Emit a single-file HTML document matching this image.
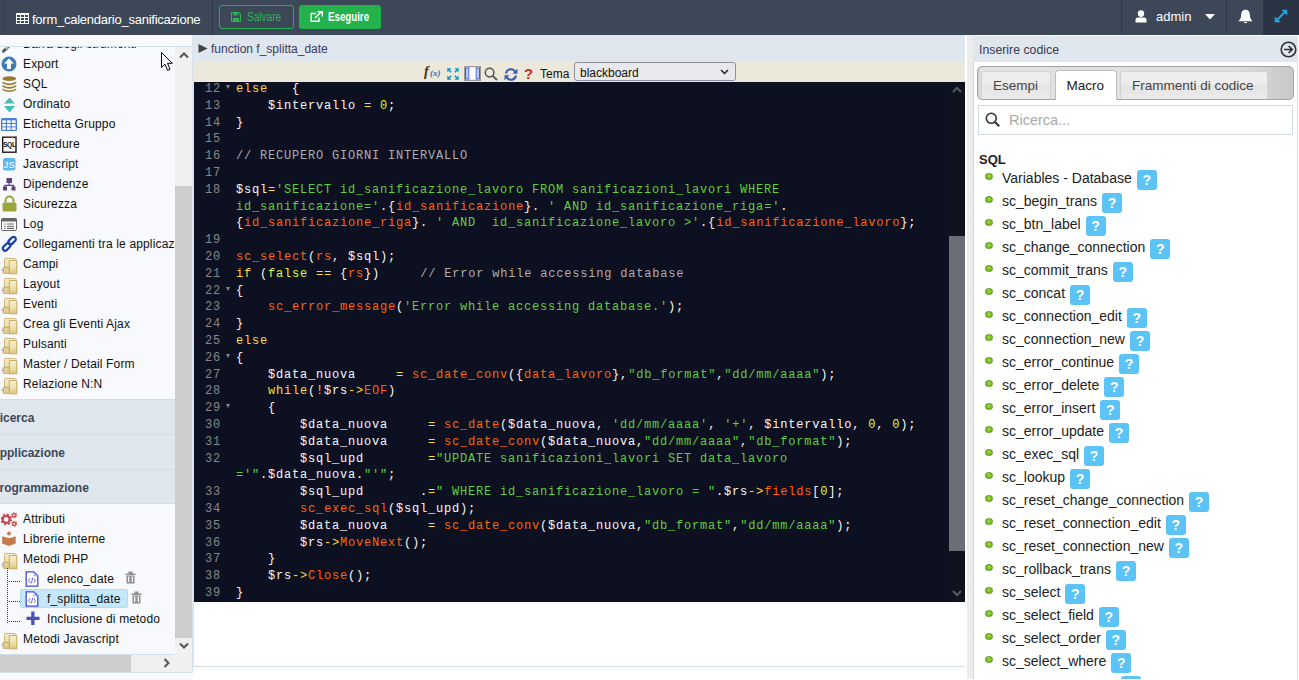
<!DOCTYPE html>
<html><head><meta charset="utf-8">
<style>
*{box-sizing:border-box;margin:0;padding:0}
html,body{width:1299px;height:680px;overflow:hidden;background:#fff;font-family:"Liberation Sans",sans-serif;}
.abs{position:absolute}
#top{position:absolute;left:0;top:0;width:1299px;height:35px;background:#3c4858;}
#side{position:absolute;left:0;top:35px;width:193px;height:645px;background:#f7f9fc;overflow:hidden}
.it{position:absolute;left:0;height:20px;line-height:20px;font-size:12px;color:#111;white-space:nowrap;letter-spacing:0.15px}
.it .tx{position:absolute;left:23px;top:0}
.it svg{position:absolute}
.hd{position:absolute;left:0;width:175px;height:35px;background:#dfe6ee;border-top:1px solid #d3dce6;font-weight:bold;font-size:12px;color:#3c4858;line-height:36px}
#ed{position:absolute;left:193px;top:35px;width:772px;height:645px;background:#fff}
#code{position:absolute;left:1px;top:47px;width:771px;height:520px;background:#0c1021;overflow:hidden}
.ln{position:absolute;left:0;height:17px;font-family:"Liberation Mono",monospace;font-size:12px;letter-spacing:0.8px;line-height:16.8px;white-space:pre;color:#f8f8f8}
.ln .n{position:absolute;left:0;width:27px;text-align:right;color:#888}
.ln .c{position:absolute;left:42px}
.fd{position:absolute;left:32px;top:4px;width:0;height:0;border-left:2.5px solid transparent;border-right:2.5px solid transparent;border-top:4px solid #888}
.k{color:#fbde2d}.a{color:#d8fa3c}.v{color:#ff6400}.s{color:#61ce3c}.cm{color:#aeaeae}
#rp{position:absolute;left:965px;top:35px;width:334px;height:644px;background:#fff;overflow:hidden}
.mi{position:absolute;left:37px;height:23px;font-size:14px;color:#222;white-space:nowrap;line-height:23px}
.q{display:inline-block;vertical-align:middle;width:20px;height:20px;border-radius:3px;background:#5bc3f6;color:#fff;font-weight:bold;font-size:14px;line-height:20px;text-align:center;margin-left:5px;position:relative;top:0px}
.bul{position:absolute;left:-17px;top:5.5px;width:7.5px;height:7.5px;border-radius:50%;background:radial-gradient(circle at 50% 40%,#9ad83a,#74bb1a 75%);border:1px solid #4e9412}
</style></head><body>
<svg width="0" height="0" style="position:absolute"><defs><linearGradient id="fg1" x1="0" y1="0" x2="0" y2="1"><stop offset="0" stop-color="#f6edcc"/><stop offset="1" stop-color="#e2cf92"/></linearGradient><linearGradient id="fg2" x1="0" y1="0" x2="0" y2="1"><stop offset="0" stop-color="#f8f0d2"/><stop offset="0.55" stop-color="#efe1ac"/><stop offset="1" stop-color="#dcc582"/></linearGradient>




</defs></svg>

<!-- TOP BAR -->
<div id="top">
  <div class="abs" style="left:4px;top:0;width:1px;height:35px;background:#323b49"></div>
  <svg class="abs" style="left:16px;top:13px" width="13" height="11" viewBox="0 0 13 11"><rect x="0.5" y="0.5" width="12" height="10" fill="none" stroke="#fff"/><rect x="0" y="0" width="13" height="2" fill="#fff"/><path d="M0 4.5H13M0 7.5H13M4.5 2V11M8.5 2V11" stroke="#fff" stroke-width="1"/></svg>
  <div class="abs" style="left:32px;top:12px;font-size:13px;letter-spacing:-0.25px;color:#fff;line-height:16px">form_calendario_sanificazione</div>
  <div class="abs" style="left:212px;top:0;width:1px;height:35px;background:#2f3845"></div>
  <div class="abs" style="left:219px;top:5px;width:75px;height:24px;border:1px solid #23b24b;border-radius:3px"></div>
  <div class="abs" style="left:299px;top:5px;width:82px;height:24px;background:#23b24b;border-radius:3px"></div>
  <svg class="abs" style="left:231px;top:12px" width="10" height="10" viewBox="0 0 10 10"><path d="M0.5 0.5H7.5L9.5 2.5V9.5H0.5z" fill="none" stroke="#2fb454" stroke-width="1.2"/><rect x="2.5" y="0.5" width="4" height="3" fill="#2fb454"/><rect x="2" y="6" width="6" height="3.5" fill="#2fb454"/></svg>
  <div class="abs" style="left:247px;top:10px;font-size:12px;color:#2fb454;line-height:14px;transform:scaleX(0.84);transform-origin:0 0">Salvare</div>
  <svg class="abs" style="left:310px;top:11px" width="13" height="11" viewBox="0 0 13 11"><path d="M6 2.5H1.2V10.3H9V6.5" fill="none" stroke="#fff" stroke-width="1.4"/><path d="M5 7L11 1M7.5 0.7H12.3V5.5" fill="none" stroke="#fff" stroke-width="1.6"/></svg>
  <div class="abs" style="left:327.5px;top:10px;font-size:12px;font-weight:bold;color:#fff;line-height:14px;transform:scaleX(0.81);transform-origin:0 0">Eseguire</div>
  <svg class="abs" style="left:1135px;top:10px" width="12" height="13" viewBox="0 0 12 13"><ellipse cx="6" cy="3.6" rx="3.2" ry="3.4" fill="#fff"/><path d="M0.5 12.5 V9.8 Q0.5 7.5 3 7.5 H9 Q11.5 7.5 11.5 9.8 V12.5z" fill="#fff"/></svg>
  <svg class="abs" style="left:1205px;top:14px" width="10" height="6" viewBox="0 0 10 6"><path d="M0 0H10L5 5.5z" fill="#fff"/></svg>
  <svg class="abs" style="left:1238px;top:9px" width="15" height="15" viewBox="0 0 15 15"><path d="M7.5 0.8 Q11.6 0.8 11.8 5.5 Q12 10 14.3 11.8 V12.3 H0.7 V11.8 Q3 10 3.2 5.5 Q3.4 0.8 7.5 0.8z" fill="#fff"/><path d="M5.6 13 Q7.5 15.4 9.4 13z" fill="#fff"/></svg>
  <div class="abs" style="left:1121px;top:0;width:1px;height:35px;background:#2f3845"></div>
  <div class="abs" style="left:1156px;top:9px;font-size:13px;color:#fff;line-height:16px">admin</div>
  <div class="abs" style="left:1226px;top:0;width:1px;height:35px;background:#2f3845"></div>
  <div class="abs" style="left:1263px;top:0;width:36px;height:35px;background:#2a3444"></div>
  <svg class="abs" style="left:1274px;top:9px" width="14" height="14" viewBox="0 0 14 14"><path d="M2.5 11.5L11.5 2.5" stroke="#1ea8ea" stroke-width="1.8"/><path d="M7.5 0.8H13.2V6.5z M0.8 7.5V13.2H6.5z" fill="#1ea8ea"/></svg>
</div>

<!-- SIDEBAR -->
<div id="side">
  <div class="abs" style="left:0;top:11px;width:193px;height:1px;background:#d5dee6"></div>
  <div id="list" class="abs" style="left:0;top:12px;width:175px;height:608px;overflow:hidden">
<div class="it" style="top:-13px;width:175px"><span class="tx" style="left:23px">Barra degli strumenti</span><svg width="16" height="19" viewBox="0 0 16 19" style="left:0px;top:1px"><path d="M2.2 15.2 L6.6 11.6 L9.6 11.8 L9.2 12.8 L4.2 17.6 Q3 18 2.2 17.2z" fill="#5a5a5a"/><circle cx="6.6" cy="13" r="0.9" fill="#f7f9fc"/></svg></div>
<div class="it" style="top:7px;width:175px"><span class="tx" style="left:23px">Export</span><svg width="16" height="16" viewBox="0 0 16 16" style="left:1px;top:2px"><circle cx="8" cy="8" r="7.5" fill="#3d7bb9"/><path d="M8 2.6 L13 7.6 H10 V13 H6 V7.6 H3z" fill="#fff"/></svg></div>
<div class="it" style="top:27px;width:175px"><span class="tx" style="left:23px">SQL</span><svg width="17" height="17" viewBox="0 0 17 17" style="left:1px;top:2px"><ellipse cx="8.3" cy="2.6" rx="6.9" ry="2.3" fill="#9c7a32"/><path d="M1.4 5.4 Q8.3 9.6 15.2 5.4 V7.2 Q8.3 11.4 1.4 7.2z" fill="#9c7a32"/><path d="M1.4 8.9 Q8.3 13.1 15.2 8.9 V10.7 Q8.3 14.9 1.4 10.7z" fill="#9c7a32"/><path d="M1.4 12.4 Q8.3 16.6 15.2 12.4 V14 Q8.3 18 1.4 14z" fill="#9c7a32"/></svg></div>
<div class="it" style="top:47px;width:175px"><span class="tx" style="left:23px">Ordinato</span><svg width="16" height="16" viewBox="0 0 16 16" style="left:1px;top:3px"><path d="M8.5 0.5 L14 6.5 H3z" fill="#47bdb6"/><path d="M3 9 H14 L8.5 15.5z" fill="#47bdb6"/></svg></div>
<div class="it" style="top:67px;width:175px"><span class="tx" style="left:23px">Etichetta Gruppo</span><svg width="17" height="16" viewBox="0 0 17 16" style="left:0px;top:3px"><rect x="1" y="1" width="16" height="13" rx="1.6" fill="#4a7fdc"/><rect x="2.4" y="3.3" width="3.4" height="2.7" fill="#fff"/><rect x="2.4" y="7.0" width="3.4" height="2.4" fill="#fff"/><rect x="2.4" y="10.4" width="3.4" height="2.4" fill="#fff"/><rect x="7.0" y="3.3" width="3.6" height="2.7" fill="#fff"/><rect x="7.0" y="7.0" width="3.6" height="2.4" fill="#fff"/><rect x="7.0" y="10.4" width="3.6" height="2.4" fill="#fff"/><rect x="11.8" y="3.3" width="3.8" height="2.7" fill="#fff"/><rect x="11.8" y="7.0" width="3.8" height="2.4" fill="#fff"/><rect x="11.8" y="10.4" width="3.8" height="2.4" fill="#fff"/></svg></div>
<div class="it" style="top:87px;width:175px"><span class="tx" style="left:23px">Procedure</span><svg width="16" height="17" viewBox="0 0 16 17" style="left:1px;top:2px"><rect x="1.7" y="1.2" width="13.3" height="15" fill="#fff" stroke="#231818" stroke-width="1.4"/><path d="M11 1.5 L14.5 5" stroke="#ccc" stroke-width="1"/><text x="8.3" y="11" font-family="Liberation Sans" font-weight="bold" font-size="6.8" text-anchor="middle" fill="#111" letter-spacing="-0.4">SQL</text></svg></div>
<div class="it" style="top:107px;width:175px"><span class="tx" style="left:23px">Javascript</span><svg width="16" height="16" viewBox="0 0 16 16" style="left:1px;top:3px"><rect x="2" y="1" width="12.5" height="12.5" rx="2.2" fill="#5cb8ec"/><text x="8.3" y="11.3" font-family="Liberation Sans" font-size="9.5" text-anchor="middle" fill="#fff">JS</text></svg></div>
<div class="it" style="top:127px;width:175px"><span class="tx" style="left:23px">Dipendenze</span><svg width="16" height="16" viewBox="0 0 16 16" style="left:1px;top:3px"><rect x="5.5" y="1" width="5.5" height="5" fill="#5e3f7e"/><path d="M8.2 6V8.3M4 10V8.3H12.5V10" stroke="#5e3f7e" stroke-width="1.2" fill="none"/><rect x="2" y="9.5" width="4" height="4" fill="#5e3f7e"/><rect x="10.5" y="9.5" width="4" height="4" fill="#5e3f7e"/></svg></div>
<div class="it" style="top:147px;width:175px"><span class="tx" style="left:23px">Sicurezza</span><svg width="16" height="17" viewBox="0 0 16 17" style="left:1px;top:1px"><path d="M4.5 7.5 V5.5 A4 4 0 0 1 12.5 5.5 V7.5" stroke="#9aa53c" stroke-width="2.2" fill="none"/><rect x="1.5" y="7.5" width="14" height="9" rx="1.5" fill="#9aa53c"/></svg></div>
<div class="it" style="top:167px;width:175px"><span class="tx" style="left:23px">Log</span><svg width="16" height="16" viewBox="0 0 16 16" style="left:1px;top:3px"><rect x="0.5" y="1.5" width="15" height="12" rx="1.5" fill="#fff" stroke="#666"/><rect x="0.5" y="1.5" width="15" height="3" fill="#666"/><path d="M3 7h1.5M6 7h7M3 9.2h1.5M6 9.2h7M3 11.4h1.5M6 11.4h7" stroke="#666" stroke-width="1.1"/></svg></div>
<div class="it" style="top:187px;width:175px"><span class="tx" style="left:23px">Collegamenti tra le applicazioni</span><svg width="17" height="17" viewBox="0 0 17 17" style="left:1px;top:2px"><g fill="none" stroke="#1a3ea8" stroke-width="2.2"><rect x="6.8" y="2.3" width="8.6" height="4.6" rx="2.3" transform="rotate(-45 11.1 4.6)"/><rect x="1.2" y="8.7" width="8.6" height="4.6" rx="2.3" transform="rotate(-45 5.5 11)"/></g></svg></div>
<div class="it" style="top:207px;width:175px"><span class="tx" style="left:23px">Campi</span><svg width="18" height="18" viewBox="0 0 18 18" style="left:0px;top:3px"><path d="M5 1.5 H14.5 Q16.3 1.5 16.3 3.3 V15.5 H4.5 V2z" fill="url(#fg1)" stroke="#cdb677" stroke-width="1"/><path d="M9.3 3.5 H15.3 Q16.8 3.5 16.8 5 V16.8 H9.3z" fill="url(#fg2)" stroke="#c5aa66" stroke-width="1"/><path d="M3.3 10.3 H9.3 V16.3 H3.3z" fill="#e3cf90" stroke="#c5aa66" stroke-width="1"/><path d="M2.2 11.5 V14.5" stroke="#9aa0b0" stroke-width="0.8"/></svg></div>
<div class="it" style="top:227px;width:175px"><span class="tx" style="left:23px">Layout</span><svg width="18" height="18" viewBox="0 0 18 18" style="left:0px;top:3px"><path d="M5 1.5 H14.5 Q16.3 1.5 16.3 3.3 V15.5 H4.5 V2z" fill="url(#fg1)" stroke="#cdb677" stroke-width="1"/><path d="M9.3 3.5 H15.3 Q16.8 3.5 16.8 5 V16.8 H9.3z" fill="url(#fg2)" stroke="#c5aa66" stroke-width="1"/><path d="M3.3 10.3 H9.3 V16.3 H3.3z" fill="#e3cf90" stroke="#c5aa66" stroke-width="1"/><path d="M2.2 11.5 V14.5" stroke="#9aa0b0" stroke-width="0.8"/></svg></div>
<div class="it" style="top:247px;width:175px"><span class="tx" style="left:23px">Eventi</span><svg width="18" height="18" viewBox="0 0 18 18" style="left:0px;top:3px"><path d="M5 1.5 H14.5 Q16.3 1.5 16.3 3.3 V15.5 H4.5 V2z" fill="url(#fg1)" stroke="#cdb677" stroke-width="1"/><path d="M9.3 3.5 H15.3 Q16.8 3.5 16.8 5 V16.8 H9.3z" fill="url(#fg2)" stroke="#c5aa66" stroke-width="1"/><path d="M3.3 10.3 H9.3 V16.3 H3.3z" fill="#e3cf90" stroke="#c5aa66" stroke-width="1"/><path d="M2.2 11.5 V14.5" stroke="#9aa0b0" stroke-width="0.8"/></svg></div>
<div class="it" style="top:267px;width:175px"><span class="tx" style="left:23px">Crea gli Eventi Ajax</span><svg width="18" height="18" viewBox="0 0 18 18" style="left:0px;top:3px"><path d="M5 1.5 H14.5 Q16.3 1.5 16.3 3.3 V15.5 H4.5 V2z" fill="url(#fg1)" stroke="#cdb677" stroke-width="1"/><path d="M9.3 3.5 H15.3 Q16.8 3.5 16.8 5 V16.8 H9.3z" fill="url(#fg2)" stroke="#c5aa66" stroke-width="1"/><path d="M3.3 10.3 H9.3 V16.3 H3.3z" fill="#e3cf90" stroke="#c5aa66" stroke-width="1"/><path d="M2.2 11.5 V14.5" stroke="#9aa0b0" stroke-width="0.8"/></svg></div>
<div class="it" style="top:287px;width:175px"><span class="tx" style="left:23px">Pulsanti</span><svg width="18" height="18" viewBox="0 0 18 18" style="left:0px;top:3px"><path d="M5 1.5 H14.5 Q16.3 1.5 16.3 3.3 V15.5 H4.5 V2z" fill="url(#fg1)" stroke="#cdb677" stroke-width="1"/><path d="M9.3 3.5 H15.3 Q16.8 3.5 16.8 5 V16.8 H9.3z" fill="url(#fg2)" stroke="#c5aa66" stroke-width="1"/><path d="M3.3 10.3 H9.3 V16.3 H3.3z" fill="#e3cf90" stroke="#c5aa66" stroke-width="1"/><path d="M2.2 11.5 V14.5" stroke="#9aa0b0" stroke-width="0.8"/></svg></div>
<div class="it" style="top:307px;width:175px"><span class="tx" style="left:23px">Master / Detail Form</span><svg width="18" height="18" viewBox="0 0 18 18" style="left:0px;top:3px"><path d="M5 1.5 H14.5 Q16.3 1.5 16.3 3.3 V15.5 H4.5 V2z" fill="url(#fg1)" stroke="#cdb677" stroke-width="1"/><path d="M9.3 3.5 H15.3 Q16.8 3.5 16.8 5 V16.8 H9.3z" fill="url(#fg2)" stroke="#c5aa66" stroke-width="1"/><path d="M3.3 10.3 H9.3 V16.3 H3.3z" fill="#e3cf90" stroke="#c5aa66" stroke-width="1"/><path d="M2.2 11.5 V14.5" stroke="#9aa0b0" stroke-width="0.8"/></svg></div>
<div class="it" style="top:327px;width:175px"><span class="tx" style="left:23px">Relazione N:N</span><svg width="18" height="18" viewBox="0 0 18 18" style="left:0px;top:3px"><path d="M5 1.5 H14.5 Q16.3 1.5 16.3 3.3 V15.5 H4.5 V2z" fill="url(#fg1)" stroke="#cdb677" stroke-width="1"/><path d="M9.3 3.5 H15.3 Q16.8 3.5 16.8 5 V16.8 H9.3z" fill="url(#fg2)" stroke="#c5aa66" stroke-width="1"/><path d="M3.3 10.3 H9.3 V16.3 H3.3z" fill="#e3cf90" stroke="#c5aa66" stroke-width="1"/><path d="M2.2 11.5 V14.5" stroke="#9aa0b0" stroke-width="0.8"/></svg></div>
<div class="hd" style="top:352px"><span style="position:absolute;left:-9px;top:0">Ricerca</span></div>
<div class="hd" style="top:387px"><span style="position:absolute;left:-9px;top:0">Applicazione</span></div>
<div class="hd" style="top:422px"><span style="position:absolute;left:-8.5px;top:0">Programmazione</span></div>
<div class="abs" style="left:0;top:456px;width:175px;height:1px;background:#d3dce6"></div>
<div class="it" style="top:462px;width:175px"><span class="tx" style="left:23px">Attributi</span><svg width="17" height="16" viewBox="0 0 17 16" style="left:1px;top:3px"><g fill="none" stroke="#c8494f"><circle cx="5.2" cy="7.4" r="3.5" stroke-width="2.3"/><circle cx="5.2" cy="7.4" r="5.1" stroke-width="1.7" stroke-dasharray="2 2.0"/><circle cx="13.2" cy="3.2" r="1.6" stroke-width="1.3"/><circle cx="13.2" cy="3.2" r="2.5" stroke-width="1.1" stroke-dasharray="1.3 1.3"/><circle cx="13.2" cy="11.7" r="1.6" stroke-width="1.3"/><circle cx="13.2" cy="11.7" r="2.5" stroke-width="1.1" stroke-dasharray="1.3 1.3"/></g></svg></div>
<div class="it" style="top:482px;width:175px"><span class="tx" style="left:23px">Librerie interne</span><svg width="16" height="16" viewBox="0 0 16 16" style="left:1px;top:2px"><circle cx="8" cy="2.5" r="1.9" fill="#c87b4a"/><path d="M1.2 5.3 L8 7.3 L14.7 5.3 V12.6 L8 15 L1.2 12.6z" fill="#c87b4a"/></svg></div>
<div class="it" style="top:502px;width:175px"><span class="tx" style="left:23px">Metodi PHP</span><svg width="18" height="18" viewBox="0 0 18 18" style="left:0px;top:3px"><path d="M5 1.5 H14.5 Q16.3 1.5 16.3 3.3 V15.5 H4.5 V2z" fill="url(#fg1)" stroke="#cdb677" stroke-width="1"/><path d="M9.3 3.5 H15.3 Q16.8 3.5 16.8 5 V16.8 H9.3z" fill="url(#fg2)" stroke="#c5aa66" stroke-width="1"/><path d="M3.3 10.3 H9.3 V16.3 H3.3z" fill="#e3cf90" stroke="#c5aa66" stroke-width="1"/><path d="M2.2 11.5 V14.5" stroke="#9aa0b0" stroke-width="0.8"/></svg></div>
<div class="abs" style="left:7px;top:521px;width:1px;height:55px;background:repeating-linear-gradient(#333 0 1px,transparent 1px 2px)"></div>
<div class="abs" style="left:8px;top:534px;width:12px;height:1px;background:repeating-linear-gradient(90deg,transparent 0 1px,#333 1px 2px)"></div>
<div class="abs" style="left:8px;top:554px;width:12px;height:1px;background:repeating-linear-gradient(90deg,transparent 0 1px,#333 1px 2px)"></div>
<div class="abs" style="left:8px;top:574px;width:12px;height:1px;background:repeating-linear-gradient(90deg,transparent 0 1px,#333 1px 2px)"></div>
<div class="abs" style="left:20px;top:542px;width:108px;height:19px;background:#c3e7fb;border:1px solid #b3dcf3;border-radius:2px"></div>
<svg class="abs" width="14" height="16" viewBox="0 0 14 16" style="left:25px;top:524px"><path d="M1.2 0.8 H8.8 L12.8 4.8 V15.2 H1.2z" fill="#fff" stroke="#4646dc" stroke-width="1.3"/><path d="M8.8 0.8 V4.8 H12.8" fill="none" stroke="#9a9ae8" stroke-width="0.9"/><path d="M5.2 7.3 L3.6 9.6 L5.2 11.9M8.8 7.3 L10.4 9.6 L8.8 11.9M7.7 6.8 L6.3 12.4" stroke="#4646dc" stroke-width="0.8" fill="none"/></svg>
<svg class="abs" width="14" height="16" viewBox="0 0 14 16" style="left:25px;top:544px"><path d="M1.2 0.8 H8.8 L12.8 4.8 V15.2 H1.2z" fill="#fff" stroke="#4646dc" stroke-width="1.3"/><path d="M8.8 0.8 V4.8 H12.8" fill="none" stroke="#9a9ae8" stroke-width="0.9"/><path d="M5.2 7.3 L3.6 9.6 L5.2 11.9M8.8 7.3 L10.4 9.6 L8.8 11.9M7.7 6.8 L6.3 12.4" stroke="#4646dc" stroke-width="0.8" fill="none"/></svg>
<svg class="abs" width="11" height="13" viewBox="0 0 11 13" style="left:125px;top:524px"><path d="M0.5 2.5 H10.5 V4 H0.5z M3.5 0.5 H7.5 V2.5 H3.5z" fill="#8f8f8f"/><path d="M1.5 4.5 H9.5 V12.5 H1.5z" fill="#8f8f8f"/><path d="M3 5.5 V11 H4.3 V5.5z M6.7 5.5 V11 H8 V5.5z" fill="#fff"/></svg>
<svg class="abs" width="11" height="13" viewBox="0 0 11 13" style="left:131px;top:544px"><path d="M0.5 2.5 H10.5 V4 H0.5z M3.5 0.5 H7.5 V2.5 H3.5z" fill="#8f8f8f"/><path d="M1.5 4.5 H9.5 V12.5 H1.5z" fill="#8f8f8f"/><path d="M3 5.5 V11 H4.3 V5.5z M6.7 5.5 V11 H8 V5.5z" fill="#fff"/></svg>
<svg class="abs" width="14" height="14" viewBox="0 0 14 14" style="left:26px;top:564px"><path d="M5.2 0.5h3.3v5.2h5v3.2h-5v5.1H5.2V8.9H0.5V5.7h4.7z" fill="#4a52b6"/></svg>
<div class="it" style="top:522px"><span class="tx" style="left:47px">elenco_date</span></div>
<div class="it" style="top:542px"><span class="tx" style="left:47px">f_splitta_date</span></div>
<div class="it" style="top:562px"><span class="tx" style="left:47px">Inclusione di metodo</span></div>
<div class="it" style="top:582px;width:175px"><span class="tx" style="left:23px">Metodi Javascript</span><svg width="18" height="18" viewBox="0 0 18 18" style="left:0px;top:3px"><path d="M5 1.5 H14.5 Q16.3 1.5 16.3 3.3 V15.5 H4.5 V2z" fill="url(#fg1)" stroke="#cdb677" stroke-width="1"/><path d="M9.3 3.5 H15.3 Q16.8 3.5 16.8 5 V16.8 H9.3z" fill="url(#fg2)" stroke="#c5aa66" stroke-width="1"/><path d="M3.3 10.3 H9.3 V16.3 H3.3z" fill="#e3cf90" stroke="#c5aa66" stroke-width="1"/><path d="M2.2 11.5 V14.5" stroke="#9aa0b0" stroke-width="0.8"/></svg></div>
  </div>
  <!-- vertical scrollbar -->
  <div class="abs" style="left:175px;top:12px;width:17px;height:608px;background:#f0f0f0"></div>
  <div class="abs" style="left:175px;top:151px;width:17px;height:452px;background:#cdcdcd"></div>
  <svg class="abs" style="left:179px;top:16px" width="10" height="8" viewBox="0 0 10 8"><path d="M1 6.5 L5 2.5 L9 6.5" stroke="#555" stroke-width="2" fill="none"/></svg>
  <svg class="abs" style="left:179px;top:607px" width="10" height="8" viewBox="0 0 10 8"><path d="M1 1.5 L5 5.5 L9 1.5" stroke="#555" stroke-width="2" fill="none"/></svg>
  <!-- horizontal scrollbar -->
  <div class="abs" style="left:0;top:619px;width:175px;height:1px;background:#d5dee6"></div>
  <div class="abs" style="left:0;top:620px;width:192px;height:17px;background:#f0f0f0"></div>
  <div class="abs" style="left:0;top:620px;width:131px;height:17px;background:#cdcdcd"></div>
  <svg class="abs" style="left:163px;top:623px" width="8" height="10" viewBox="0 0 8 10"><path d="M1.5 1 L5.5 5 L1.5 9" stroke="#555" stroke-width="2" fill="none"/></svg>
  <div class="abs" style="left:0;top:637px;width:193px;height:1px;background:#d5dee6"></div>
  <div class="abs" style="left:192px;top:0;width:2px;height:638px;background:#dbe4ec"></div>
  <!-- cursor -->
  <svg class="abs" style="left:160px;top:16px" width="14" height="21" viewBox="0 0 14 21"><path d="M1.5 1.5 V16.5 L5 13.2 L7.6 19.3 L10 18.3 L7.5 12.3 H12.3z" fill="#fff" stroke="#000" stroke-width="1" stroke-linejoin="round"/></svg>
</div>

<!-- EDITOR -->
<div id="ed">
  <div class="abs" style="left:0;top:0;width:772px;height:26px;background:#dfe6ee"></div>
  <svg class="abs" style="left:5px;top:9px" width="10" height="9" viewBox="0 0 10 9"><path d="M0.5 0 L9.5 4.5 L0.5 9z" fill="#444"/></svg>
  <div class="abs" style="left:18px;top:7px;font-size:12px;color:#3a3a5c;line-height:14px;white-space:nowrap">function f_splitta_date</div>
  <div class="abs" style="left:1px;top:26px;width:771px;height:21px;background:#ece8da"></div>
  <div class="abs" style="left:0;top:26px;width:1px;height:606px;background:#dbe4ec"></div>
  <!-- toolbar icons -->
  <div class="abs" style="left:231px;top:30px;font-family:'Liberation Serif',serif;font-style:italic;font-weight:bold;font-size:14px;color:#333;line-height:14px">f</div>
  <div class="abs" style="left:237px;top:33px;font-family:'Liberation Serif',serif;font-style:italic;font-weight:bold;font-size:9px;color:#3a6aa8;line-height:10px">(x)</div>
  <svg class="abs" style="left:254px;top:33px" width="12" height="12" viewBox="0 0 12 12"><g stroke="#1f95b8" stroke-width="1.6" fill="none"><path d="M1 1L4.2 4.2M11 1L7.8 4.2M1 11L4.2 7.8M11 11L7.8 7.8"/></g><g fill="#1f95b8"><path d="M0.3 0.3H4.5L0.3 4.5z M11.7 0.3H7.5L11.7 4.5z M0.3 11.7H4.5L0.3 7.5z M11.7 11.7H7.5L11.7 7.5z"/></g></svg>
  <svg class="abs" style="left:271px;top:31px" width="17" height="15" viewBox="0 0 17 15"><rect x="0.5" y="0.5" width="16" height="14" fill="#e8e8e8" stroke="#999"/><rect x="1.5" y="2" width="3.5" height="11" fill="#b8c8f0" stroke="#3a5fd8"/><rect x="12" y="2" width="3.5" height="11" fill="#b8c8f0" stroke="#3a5fd8"/><rect x="5.5" y="2" width="6" height="11" fill="#fafafa"/></svg>
  <svg class="abs" style="left:291px;top:32px" width="14" height="14" viewBox="0 0 14 14"><circle cx="5.6" cy="5.6" r="4.3" fill="none" stroke="#555" stroke-width="1.5"/><path d="M8.8 8.8L13 13" stroke="#555" stroke-width="1.8"/></svg>
  <svg class="abs" style="left:311px;top:33px" width="14" height="13" viewBox="0 0 14 13"><g fill="none" stroke="#3b5bb0" stroke-width="2"><path d="M2 5.5 A5 5 0 0 1 11.3 3.8"/><path d="M12 7.5 A5 5 0 0 1 2.7 9.2"/></g><path d="M13.5 0.8 V5.8 H8.5z" fill="#3b5bb0"/><path d="M0.5 12.2 V7.2 H5.5z" fill="#3b5bb0"/></svg>
  <div class="abs" style="left:331px;top:31px;font-weight:bold;font-size:15px;color:#d42a2a;line-height:16px">?</div>
  <div class="abs" style="left:347px;top:32px;font-size:12px;color:#111;line-height:14px">Tema</div>
  <div class="abs" style="left:381px;top:27px;width:162px;height:19px;background:#e9e9ed;border:1px solid #8f8f9d;border-radius:3px"></div>
  <div class="abs" style="left:387px;top:31px;font-size:12px;color:#111;line-height:14px">blackboard</div>
  <svg class="abs" style="left:527px;top:34px" width="9" height="6" viewBox="0 0 9 6"><path d="M1 1 L4.5 4.5 L8 1" stroke="#222" stroke-width="1.5" fill="none"/></svg>
  <div id="code">
<div class="ln" style="top:-1.00px"><span class="n">12</span><i class="fd"></i><span class="c"><span class="k">else</span>   {</span></div>
<div class="ln" style="top:15.80px"><span class="n">13</span><span class="c">    $intervallo <span class="k">=</span> <span class="a">0</span>;</span></div>
<div class="ln" style="top:32.60px"><span class="n">14</span><span class="c">}</span></div>
<div class="ln" style="top:49.40px"><span class="n">15</span><span class="c"></span></div>
<div class="ln" style="top:66.20px"><span class="n">16</span><span class="c"><span class="cm">// RECUPERO GIORNI INTERVALLO</span></span></div>
<div class="ln" style="top:83.00px"><span class="n">17</span><span class="c"></span></div>
<div class="ln" style="top:99.80px"><span class="n">18</span><span class="c">$sql<span class="k">=</span><span class="s">&#x27;SELECT id_sanificazione_lavoro FROM sanificazioni_lavori WHERE </span></span></div>
<div class="ln" style="top:116.60px"><span class="c"><span class="s">id_sanificazione=&#x27;</span>.{<span class="v">id_sanificazione</span>}. <span class="s">&#x27; AND id_sanificazione_riga=&#x27;</span>.</span></div>
<div class="ln" style="top:133.40px"><span class="c">{<span class="v">id_sanificazione_riga</span>}. <span class="s">&#x27; AND  id_sanificazione_lavoro &gt;&#x27;</span>.{<span class="v">id_sanificazione_lavoro</span>};</span></div>
<div class="ln" style="top:150.20px"><span class="n">19</span><span class="c"></span></div>
<div class="ln" style="top:167.00px"><span class="n">20</span><span class="c"><span class="v">sc_select</span>(<span class="v">rs</span>, $sql);</span></div>
<div class="ln" style="top:183.80px"><span class="n">21</span><span class="c"><span class="k">if</span> (<span class="a">false</span> <span class="k">==</span> {<span class="v">rs</span>})     <span class="cm">// Error while accessing database</span></span></div>
<div class="ln" style="top:200.60px"><span class="n">22</span><i class="fd"></i><span class="c">{</span></div>
<div class="ln" style="top:217.40px"><span class="n">23</span><span class="c">    <span class="v">sc_error_message</span>(<span class="s">&#x27;Error while accessing database.&#x27;</span>);</span></div>
<div class="ln" style="top:234.20px"><span class="n">24</span><span class="c">}</span></div>
<div class="ln" style="top:251.00px"><span class="n">25</span><span class="c"><span class="k">else</span></span></div>
<div class="ln" style="top:267.80px"><span class="n">26</span><i class="fd"></i><span class="c">{</span></div>
<div class="ln" style="top:284.60px"><span class="n">27</span><span class="c">    $data_nuova     <span class="k">=</span> <span class="v">sc_date_conv</span>({<span class="v">data_lavoro</span>},<span class="s">&quot;db_format&quot;</span>,<span class="s">&quot;dd/mm/aaaa&quot;</span>);</span></div>
<div class="ln" style="top:301.40px"><span class="n">28</span><span class="c">    <span class="k">while</span>(<span class="k">!</span>$rs<span class="k">-&gt;</span><span class="v">EOF</span>)</span></div>
<div class="ln" style="top:318.20px"><span class="n">29</span><i class="fd"></i><span class="c">    {</span></div>
<div class="ln" style="top:335.00px"><span class="n">30</span><span class="c">        $data_nuova     <span class="k">=</span> <span class="v">sc_date</span>($data_nuova, <span class="s">&#x27;dd/mm/aaaa&#x27;</span>, <span class="s">&#x27;+&#x27;</span>, $intervallo, <span class="a">0</span>, <span class="a">0</span>);</span></div>
<div class="ln" style="top:351.80px"><span class="n">31</span><span class="c">        $data_nuova     <span class="k">=</span> <span class="v">sc_date_conv</span>($data_nuova,<span class="s">&quot;dd/mm/aaaa&quot;</span>,<span class="s">&quot;db_format&quot;</span>);</span></div>
<div class="ln" style="top:368.60px"><span class="n">32</span><span class="c">        $sql_upd        <span class="k">=</span><span class="s">&quot;UPDATE sanificazioni_lavori SET data_lavoro </span></span></div>
<div class="ln" style="top:385.40px"><span class="c"><span class="s">=&#x27;&quot;</span>.$data_nuova.<span class="s">&quot;&#x27;&quot;</span>;</span></div>
<div class="ln" style="top:402.20px"><span class="n">33</span><span class="c">        $sql_upd       .<span class="k">=</span><span class="s">&quot; WHERE id_sanificazione_lavoro = &quot;</span>.$rs<span class="k">-&gt;</span><span class="v">fields</span>[<span class="a">0</span>];</span></div>
<div class="ln" style="top:419.00px"><span class="n">34</span><span class="c">        <span class="v">sc_exec_sql</span>($sql_upd);</span></div>
<div class="ln" style="top:435.80px"><span class="n">35</span><span class="c">        $data_nuova     <span class="k">=</span> <span class="v">sc_date_conv</span>($data_nuova,<span class="s">&quot;db_format&quot;</span>,<span class="s">&quot;dd/mm/aaaa&quot;</span>);</span></div>
<div class="ln" style="top:452.60px"><span class="n">36</span><span class="c">        $rs<span class="k">-&gt;</span><span class="v">MoveNext</span>();</span></div>
<div class="ln" style="top:469.40px"><span class="n">37</span><span class="c">    }</span></div>
<div class="ln" style="top:486.20px"><span class="n">38</span><span class="c">    $rs<span class="k">-&gt;</span><span class="v">Close</span>();</span></div>
<div class="ln" style="top:503.00px"><span class="n">39</span><span class="c">}</span></div>
  <div class="abs" style="left:755px;top:0;width:16px;height:520px;background:#0f1320"></div>
  <div class="abs" style="left:755px;top:154px;width:16px;height:315px;background:#6b6e77"></div>
  <svg class="abs" style="left:758px;top:4px" width="10" height="7" viewBox="0 0 10 7"><path d="M1 6 L5 2 L9 6" stroke="#555a66" stroke-width="2" fill="none"/></svg>
  <svg class="abs" style="left:758px;top:508px" width="10" height="7" viewBox="0 0 10 7"><path d="M1 1 L5 5 L9 1" stroke="#555a66" stroke-width="2" fill="none"/></svg>
</div>
  <div class="abs" style="left:0;top:631px;width:772px;height:1px;background:#d3dde5"></div>
</div>

<!-- RIGHT PANEL -->
<div id="rp">
  <div class="abs" style="left:2px;top:0;width:7px;height:644px;background:#ececec;border-right:1px solid #d6d6d6"></div>
  <div class="abs" style="left:8px;top:1px;width:325px;height:26px;background:#dfe6ee"></div>
  <div class="abs" style="left:14px;top:8px;font-size:12.3px;color:#3a3a50;line-height:14px;white-space:nowrap">Inserire codice</div>
  <svg class="abs" style="left:315px;top:6px" width="17" height="17" viewBox="0 0 17 17"><circle cx="8.5" cy="8.5" r="7.3" fill="none" stroke="#333" stroke-width="1.6"/><path d="M4 8.5H12M8.6 5L12.2 8.5L8.6 12" stroke="#333" stroke-width="1.7" fill="none"/></svg>
  <div class="abs" style="left:9px;top:27px;width:324px;height:618px;background:#fff;border-right:1px solid #dcdcdc"></div>
  <!-- tabs -->
  <div class="abs" style="left:12px;top:31px;width:317px;height:34px;border:1px solid #a3a3a3;border-radius:5px;background:linear-gradient(90deg,#d0d0d0 0,#e2e2e2 4px,#e0e0e0 80%,#c8c8c8 100%)"></div>
  <div class="abs" style="left:15.5px;top:35.5px;width:70px;height:28.5px;border:1px solid #d3d3d3;border-bottom:none;border-radius:4px 4px 0 0;background:linear-gradient(#efefef 0,#ececec 50%,#e4e4e4 50%,#ebebeb 100%)"></div>
  <div class="abs" style="left:89.5px;top:35px;width:62px;height:30px;border:1px solid #bdbdbd;border-bottom:none;border-radius:4px 4px 0 0;background:#fff"></div>
  <div class="abs" style="left:155px;top:35.5px;width:148px;height:28.5px;border:1px solid #d3d3d3;border-bottom:none;border-radius:4px 4px 0 0;background:linear-gradient(#efefef 0,#ececec 50%,#e4e4e4 50%,#ebebeb 100%)"></div>
  <div class="abs" style="left:28px;top:43px;font-size:13.5px;color:#444;line-height:16px">Esempi</div>
  <div class="abs" style="left:101.5px;top:43px;font-size:13.5px;color:#222;line-height:16px">Macro</div>
  <div class="abs" style="left:167px;top:43px;font-size:13.5px;color:#444;line-height:16px;white-space:nowrap">Frammenti di codice</div>
  <!-- search -->
  <div class="abs" style="left:13px;top:70px;width:315px;height:30px;border:1px solid #cfdde6;background:#fff"></div>
  <svg class="abs" style="left:20px;top:77px" width="16" height="15" viewBox="0 0 16 15"><circle cx="6.3" cy="6.3" r="5" fill="none" stroke="#333" stroke-width="1.6"/><path d="M9.8 9.8L14.2 14.2" stroke="#333" stroke-width="2.2"/></svg>
  <div class="abs" style="left:44px;top:77px;font-size:14.5px;color:#aaa;line-height:17px">Ricerca...</div>
  <div class="abs" style="left:14px;top:118px;font-size:13px;font-weight:bold;color:#222;line-height:14px">SQL</div>
<div class="mi" style="top:132.4px"><i class="bul"></i>Variables - Database<span class="q">?</span></div>
<div class="mi" style="top:155.4px"><i class="bul"></i>sc_begin_trans<span class="q">?</span></div>
<div class="mi" style="top:178.4px"><i class="bul"></i>sc_btn_label<span class="q">?</span></div>
<div class="mi" style="top:201.4px"><i class="bul"></i>sc_change_connection<span class="q">?</span></div>
<div class="mi" style="top:224.4px"><i class="bul"></i>sc_commit_trans<span class="q">?</span></div>
<div class="mi" style="top:247.4px"><i class="bul"></i>sc_concat<span class="q">?</span></div>
<div class="mi" style="top:270.4px"><i class="bul"></i>sc_connection_edit<span class="q">?</span></div>
<div class="mi" style="top:293.4px"><i class="bul"></i>sc_connection_new<span class="q">?</span></div>
<div class="mi" style="top:316.4px"><i class="bul"></i>sc_error_continue<span class="q">?</span></div>
<div class="mi" style="top:339.4px"><i class="bul"></i>sc_error_delete<span class="q">?</span></div>
<div class="mi" style="top:362.4px"><i class="bul"></i>sc_error_insert<span class="q">?</span></div>
<div class="mi" style="top:385.4px"><i class="bul"></i>sc_error_update<span class="q">?</span></div>
<div class="mi" style="top:408.4px"><i class="bul"></i>sc_exec_sql<span class="q">?</span></div>
<div class="mi" style="top:431.4px"><i class="bul"></i>sc_lookup<span class="q">?</span></div>
<div class="mi" style="top:454.4px"><i class="bul"></i>sc_reset_change_connection<span class="q">?</span></div>
<div class="mi" style="top:477.4px"><i class="bul"></i>sc_reset_connection_edit<span class="q">?</span></div>
<div class="mi" style="top:500.4px"><i class="bul"></i>sc_reset_connection_new<span class="q">?</span></div>
<div class="mi" style="top:523.4px"><i class="bul"></i>sc_rollback_trans<span class="q">?</span></div>
<div class="mi" style="top:546.4px"><i class="bul"></i>sc_select<span class="q">?</span></div>
<div class="mi" style="top:569.4px"><i class="bul"></i>sc_select_field<span class="q">?</span></div>
<div class="mi" style="top:592.4px"><i class="bul"></i>sc_select_order<span class="q">?</span></div>
<div class="mi" style="top:615.4px"><i class="bul"></i>sc_select_where<span class="q">?</span></div>
<div class="mi" style="top:638.4px;color:transparent"><i class="bul"></i>sc_set_fetchmode<span class="q">?</span></div>
</div>

</body></html>
